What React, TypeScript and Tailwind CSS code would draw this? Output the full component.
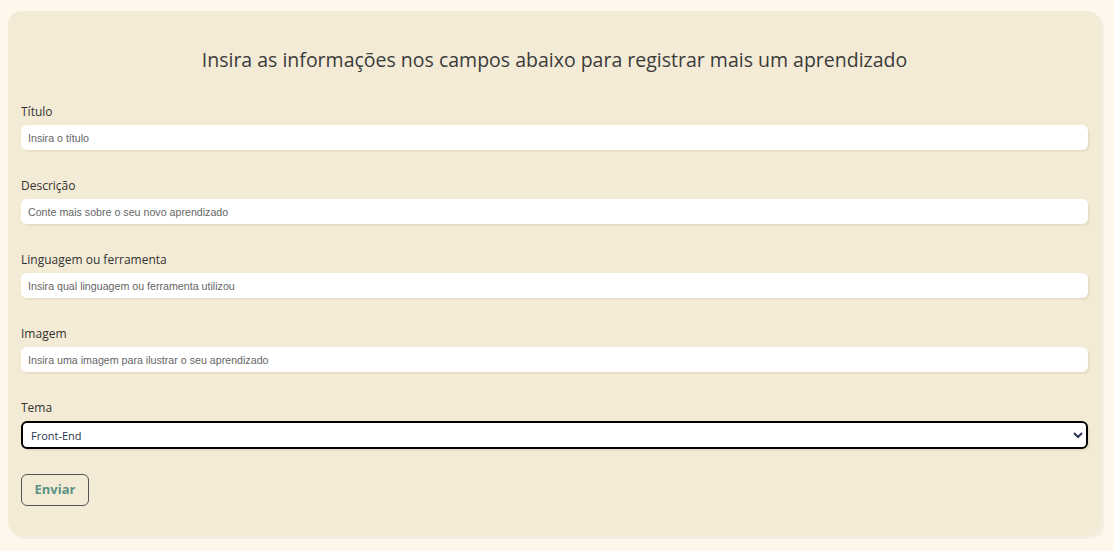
const campos = [
  { label: "Título", placeholder: "Insira o título" },
  { label: "Descrição", placeholder: "Conte mais sobre o seu novo aprendizado" },
  { label: "Linguagem ou ferramenta", placeholder: "Insira qual linguagem ou ferramenta utilizou" },
  { label: "Imagem", placeholder: "Insira uma imagem para ilustrar o seu aprendizado" },
];

export default function App() {
  return (
    <div className="min-h-[551px] bg-[#fef8ec] pt-[11px] pb-[14px] pl-2 pr-[13px] font-['Open_Sans',sans-serif]">
      <form
        className="rounded-[14px] bg-[#f3ebd6] px-[13px] pt-[35px] pb-[30px] shadow-[3px_3px_0_#f5efe2]"
        onSubmit={e => e.preventDefault()}
      >
        <h1 className="text-center text-[19.5px] leading-[28px] text-[#3b3b3b] mb-[28px]">
          Insira as informações nos campos abaixo para registrar mais um aprendizado
        </h1>
        {campos.map(campo => (
          <div key={campo.label} className="flex flex-col mb-[26px]">
            <label className="text-[12px] leading-[18px] pt-[1px] text-[#333] mb-[4px]">{campo.label}</label>
            <input
              type="text"
              placeholder={campo.placeholder}
              className="h-[25px] rounded-md bg-white px-[7px] text-[10.67px] font-['Liberation_Sans',sans-serif] text-[#333] placeholder:text-[#666] outline-none shadow-[2px_2px_0_#e9dfc7]"
            />
          </div>
        ))}
        <div className="flex flex-col mb-[26px]">
          <label className="text-[12px] leading-[18px] pt-[1px] text-[#333] mb-[4px]">Tema</label>
          <select className="h-[28px] rounded-md border-2 border-black bg-white pl-[4px] pr-[4px] text-[11px] text-[#2a3550] shadow-[2px_2px_0_#e9dfc7]">
            <option>Front-End</option>
            <option>Back-End</option>
            <option>Mobile</option>
          </select>
        </div>
        <button
          type="submit"
          className="h-[32px] w-[68px] rounded-md border border-[#555] text-[13px] font-bold text-[#5b9283] mt-[-1px]"
        >
          Enviar
        </button>
      </form>
    </div>
  );
}
